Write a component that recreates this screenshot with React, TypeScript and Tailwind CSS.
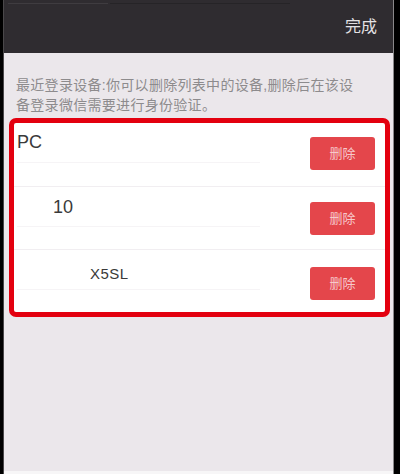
const devices = [
  { name: "PC", indent: "pl-[3px]", textTop: "pt-[10px]", btnTop: "mt-[14px]", h: "h-[64px]", size: "text-[18px]" },
  { name: "10", indent: "pl-[39px]", textTop: "pt-[11px]", btnTop: "mt-[15px]", h: "h-[63px]", size: "text-[18px]" },
  { name: "X5SL", indent: "pl-[76px]", textTop: "pt-[15px]", btnTop: "mt-[17px]", h: "h-[62px]", size: "text-[15px] tracking-[0.5px]" },
];

function DeviceRow({ d, last }: { d: (typeof devices)[number]; last: boolean }) {
  return (
    <div
      className={`relative flex justify-between pr-[10px] ${d.h} ${last ? "" : "border-b border-[#f1eef1]"}`}
    >
      {/* faint detail lines under the device name */}
      <div className="absolute left-[3px] top-[39px] w-[243px] h-px bg-[#f6f4f6]" />
      <div className={`${d.indent} ${d.textTop} ${d.size} leading-[18px] text-[#3a3a3a]`}>
        {d.name}
      </div>
      <button
        className={`${d.btnTop} w-[65px] h-[33px] rounded-[3px] bg-[#e4464b] text-[13px] text-[#f7c9cb] flex items-center justify-center`}
      >
        删除
      </button>
    </div>
  );
}

export default function App() {
  return (
    <div
      className="w-[400px] h-[474px] flex bg-black overflow-hidden"
      style={{ fontFamily: '"Liberation Sans", "Noto Sans CJK SC", sans-serif' }}
    >
      <div className="w-[3px] bg-black" />
      <div className="w-px bg-[#4a484a]" />
      <div className="flex-1 flex flex-col">
        {/* title bar */}
        <div className="relative h-[53px] bg-[#2f2c30] flex items-center justify-end pr-[16px]">
          <div className="absolute top-[3px] left-[4px] w-[100px] h-px bg-[#3f3c40]" />
          <div className="absolute top-[3px] left-[106px] w-[180px] h-px bg-[#262427]" />
          <span className="text-[16px] text-[#e4e2e4] mt-[1px]">完成</span>
        </div>

        <div className="flex-1 bg-[#ebe7eb] flex flex-col">
          <p className="pl-[12px] pt-[22px] text-[14px] leading-[20px] text-[#8d8b8d] tracking-[0.3px]">
            最近登录设备:你可以删除列表中的设备,删除后在该设
            <br />
            备登录微信需要进行身份验证。
          </p>

          <div className="ml-[5px] mr-[3px] mt-[3px] border-[5px] border-[#e3000f] rounded-[7px] bg-white">
            {devices.map((d, i) => (
              <DeviceRow key={d.name} d={d} last={i === devices.length - 1} />
            ))}
          </div>

          <div className="flex-1" />
        </div>
        <div className="h-[3px] bg-[#f7f6f7]" />
      </div>
      <div className="w-px bg-[#8a888a]" />
      <div className="w-[6px] bg-black" />
    </div>
  );
}
